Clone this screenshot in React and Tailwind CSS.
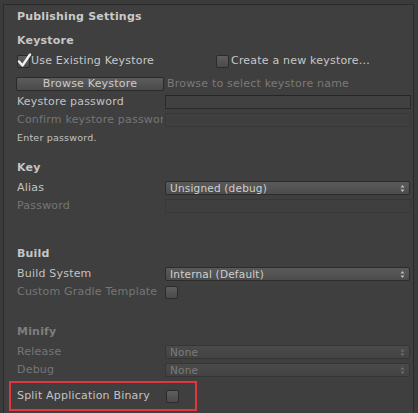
import React from "react";

const font = { fontFamily: '"DejaVu Sans", Verdana, sans-serif' };

const Check = ({ checked }) => (
  <div className="relative w-[13px] h-[13px] shrink-0 rounded-[2px] border border-[#2b2b2b] bg-gradient-to-b from-[#5e5e5e] to-[#4a4a4a]">
    {checked && (
      <svg className="absolute -left-[1px] -top-[3px]" width="15" height="15" viewBox="0 0 15 15">
        <path d="M2 8.5 L5.5 12.5 L13 1.5" fill="none" stroke="#f2f2f2" strokeWidth="2.4" strokeLinecap="round" strokeLinejoin="round" />
      </svg>
    )}
  </div>
);

const Field = ({ disabled }) => (
  <div
    className={
      "flex-1 h-[14px] mr-[2px] border " +
      (disabled ? "border-[#383838] bg-[#3f3f3f]" : "border-[#2a2a2a] bg-[#414141] border-t-[#262626]")
    }
  />
);

const Popup = ({ value, disabled }) => (
  <div
    className={
      "flex-1 h-[14px] mr-[3px] flex items-center justify-between pl-[4px] pr-[4px] rounded-[2px] border " +
      (disabled
        ? "border-[#353535] bg-gradient-to-b from-[#4a4a4a] to-[#434343] text-[#7c7c7c]"
        : "border-[#2c2c2c] bg-gradient-to-b from-[#5a5a5a] to-[#4c4c4c] text-[#cfcfcf]")
    }
  >
    <span className="text-[10.5px] leading-none tracking-[0.2px]">{value}</span>
    <svg width="5" height="9" viewBox="0 0 5 9">
      <path d="M0.5 3.5 L2.5 1 L4.5 3.5 Z M0.5 5.5 L2.5 8 L4.5 5.5 Z" fill={disabled ? "#6e6e6e" : "#bdbdbd"} />
    </svg>
  </div>
);

const Row = ({ label, disabled, children, className = "" }) => (
  <div className={"flex items-center h-[18px] " + className}>
    <div
      className={
        "w-[146px] mr-[2px] shrink-0 text-[11px] tracking-[0.2px] whitespace-nowrap overflow-hidden " +
        (disabled ? "text-[#767676]" : "text-[#c3c3c3]")
      }
    >
      {label}
    </div>
    {children}
  </div>
);

const Header = ({ children, className = "", disabled }) => (
  <div
    className={
      "h-[18px] flex items-center text-[11px] tracking-[0.2px] font-bold " +
      (disabled ? "text-[#7e7e7e] " : "text-[#c6c6c6] ") +
      className
    }
  >
    {children}
  </div>
);

export default function App() {
  return (
    <div className="w-[418px] h-[413px] bg-[#3b3b3b] overflow-hidden" style={font}>
      <div className="ml-[3px] mt-[4px] w-[411px] h-[420px] border-l border-t border-r border-[#2a2a2a] bg-[#3f3f3f] pl-[13px] pt-[2px]">
        <div className="h-[21px] flex items-center text-[11px] tracking-[0.2px] font-bold text-[#cacaca]">Publishing Settings</div>

        <Header className="mt-[4px]">Keystore</Header>
        <div className="flex items-center h-[18px] mt-[2px]">
          <div className="flex items-center gap-[1px] w-[199px]">
            <Check checked />
            <span className="text-[11px] tracking-[0.2px] text-[#c8c8c8]">Use Existing Keystore</span>
          </div>
          <div className="flex items-center gap-[2px]">
            <Check />
            <span className="text-[11px] tracking-[0.2px] text-[#c8c8c8]">Create a new keystore...</span>
          </div>
        </div>

        <div className="flex items-center h-[18px] mt-[5px]">
          <div className="w-[148px] h-[14px] -ml-[1px] mr-[3px] flex items-center justify-center rounded-[2px] border border-[#2a2a2a] bg-gradient-to-b from-[#5c5c5c] to-[#4a4a4a] text-[11px] tracking-[0.2px] text-[#cccccc]">
            Browse Keystore
          </div>
          <span className="text-[11px] tracking-[0.2px] text-[#7a7a7a] whitespace-nowrap">Browse to select keystore name</span>
        </div>
        <Row label="Keystore password">
          <Field />
        </Row>
        <Row label="Confirm keystore password" disabled>
          <Field disabled />
        </Row>
        <div className="h-[18px] flex items-center text-[9.5px] tracking-[0.2px] text-[#c3c3c3]">Enter password.</div>

        <Header className="mt-[12px]">Key</Header>
        <Row label="Alias" className="mt-[2px]">
          <Popup value="Unsigned (debug)" />
        </Row>
        <Row label="Password" disabled>
          <Field disabled />
        </Row>

        <Header className="mt-[30px]">Build</Header>
        <Row label="Build System" className="mt-[2px]">
          <Popup value="Internal (Default)" />
        </Row>
        <Row label="Custom Gradle Template" disabled>
          <Check />
        </Row>

        <Header className="mt-[22px]" disabled>Minify</Header>
        <Row label="Release" disabled className="mt-[2px]">
          <Popup value="None" disabled />
        </Row>
        <Row label="Debug" disabled>
          <Popup value="None" disabled />
        </Row>

        <div className="-ml-[8px] mt-[2px] w-[188px] h-[30px] border-2 border-[#e2363e] pl-[6px] flex items-center">
          <div className="w-[149px] shrink-0 text-[11px] tracking-[0.2px] text-[#c3c3c3] whitespace-nowrap">Split Application Binary</div>
          <Check />
        </div>
      </div>
    </div>
  );
}
